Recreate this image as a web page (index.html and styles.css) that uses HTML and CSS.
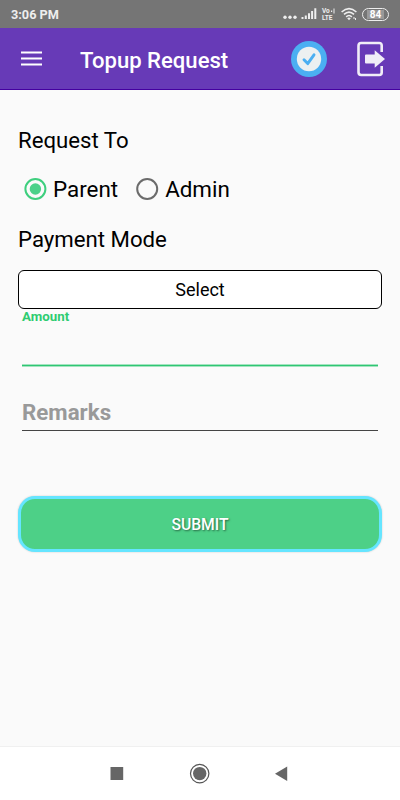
FILE: index.html
```
<!DOCTYPE html>
<html lang="en">
<head>
    <meta charset="UTF-8">
    <meta name="viewport" content="width=device-width, initial-scale=1.0">
    <title>Topup Request</title>
    <link rel="stylesheet" href="styles.css">
</head>
<body>
    <div class="status-bar">
        <span class="time">3:06 PM</span>
        <div class="status-icons">
            <svg class="dots" width="14" height="14" viewBox="0 0 14 14">
                <circle cx="2" cy="10.2" r="1.7"/><circle cx="7" cy="10.2" r="1.7"/><circle cx="12" cy="10.2" r="1.7"/>
            </svg>
            <svg class="signal" width="16" height="14" viewBox="0 0 16 14">
                <path d="M.5 10h2v2h-2zM3.8 8.5h2V12h-2zM7 6.3h2V12H7zM10.1 4h2v8h-2zM13.3 1.3h2V12h-2z"/>
            </svg>
            <div class="volte">
                <div class="volte-top">
                    <span>Vo</span>
                    <svg width="4" height="6" viewBox="0 0 4 6"><path d="M0 2.5h1.2V4H0zM2.5 .5h1v5h-1z"/></svg>
                </div>
                <span>LTE</span>
            </div>
            <svg class="wifi" width="17" height="14" viewBox="0 0 17 14">
                <path d="M.6 5Q8 -1.8 15.4 5M3 7.4Q8 2.8 13 7.4M5.2 9.8Q8 7.2 10.8 9.8" fill="none" stroke="#eee" stroke-width="1.6"/>
                <path d="M6.2 11.2Q8 9.8 9.8 11.2L8 13.2zM12.5 10h1v2h-1zM14 11h1v2h-1z"/>
            </svg>
            <span class="battery"><span>84</span></span>
        </div>
    </div>

    <header class="app-bar">
        <svg class="menu" width="22" height="16" viewBox="0 0 22 16">
            <path d="M0 1.5h21M0 7.5h21M0 13.5h21" stroke="#fff" stroke-width="2"/>
        </svg>
        <h1>Topup Request</h1>
        <svg class="check" width="36" height="36" viewBox="0 0 36 36">
            <circle cx="18" cy="18" r="18" fill="#4baff2"/>
            <circle cx="18" cy="18" r="12.2" fill="#ecf0f1"/>
            <path d="M13 18.8l3.7 3.8 6.3-8.8" fill="none" stroke="#4baff2" stroke-width="2.9" stroke-linecap="round" stroke-linejoin="round"/>
        </svg>
        <svg class="logout" width="28" height="36" viewBox="0 0 28 36">
            <path d="M24.7 11V4.5Q24.7 2 22.2 2H4.2Q1.5 2 1.5 4.7V31.3Q1.5 34 4.2 34H22.2Q24.7 34 24.7 31.5V25" fill="none" stroke="#f0edf7" stroke-width="2.6"/>
            <path d="M9 13.6h8.7V9.2L28 18l-10.3 8.8v-4.4H9q-1 0-1-1v-6.8q0-1 1-1z" fill="#f0edf7"/>
        </svg>
    </header>

    <main class="content">
        <h2>Request To</h2>
        <div class="radio-group">
            <label class="radio">
                <svg width="24" height="24" viewBox="0 0 24 24">
                    <circle cx="12.4" cy="12" r="10" fill="none" stroke="#3ecf7e" stroke-width="2"/>
                    <circle cx="12.4" cy="12" r="5.7" fill="#4bd189"/>
                </svg>
                <span>Parent</span>
            </label>
            <label class="radio">
                <svg width="24" height="24" viewBox="0 0 24 24">
                    <circle cx="12.2" cy="12" r="10" fill="none" stroke="#6b6b6b" stroke-width="2"/>
                </svg>
                <span>Admin</span>
            </label>
        </div>
        <h2>Payment Mode</h2>
        <button class="select" type="button">Select</button>
        <div class="field amount"><span>Amount</span></div>
        <div class="field remarks"><span>Remarks</span></div>
        <button class="submit" type="button">SUBMIT</button>
    </main>

    <nav class="nav-bar">
        <svg width="200" height="24" viewBox="0 0 200 24">
            <path d="M10.5 5h12.7v13H10.5zM187.2 4.500v14.5L175 11.700z" fill="#666"/>
            <circle cx="99.7" cy="11.6" r="9.2" fill="none" stroke="#555" stroke-width="1.2"/>
            <circle cx="99.7" cy="11.6" r="6.7" fill="#666"/>
        </svg>
    </nav>
</body>
</html>
```
FILE: styles.css
```
* {
    box-sizing: border-box;
}
body {
    margin: 0;
    height: 800px;
    display: flex;
    flex-direction: column;
    background-color: #fafafa;
    font-family: Roboto, sans-serif;
    color: #000;
    overflow: hidden;
}
.status-bar {
    height: 28px;
    flex: none;
    display: flex;
    align-items: center;
    justify-content: space-between;
    padding: 0 11px;
    background-color: #757575;
    color: #eee;
}
.time {
    padding-top: 1px;
    font-size: 12.7px;
    font-weight: 700;
    line-height: 27px;
}
.status-icons {
    display: flex;
    align-items: center;
    fill: #eee;
}
.signal {
    margin: 0 5px 0 4px;
}
.volte {
    width: 14px;
    display: flex;
    flex-direction: column;
    gap: 1px;
    font-size: 6.5px;
    font-weight: 700;
    line-height: 6px;
}
.volte-top {
    display: flex;
    gap: 1px;
    height: 6px;
}
.wifi {
    margin: 0 4px 0 5px;
}
.battery {
    width: 27px;
    height: 13px;
    padding: 1px 4px;
    border: 1px solid #eee;
    border-radius: 7px;
}
.battery span {
    display: block;
    height: 9px;
    background-color: #999;
    color: #fff;
    font-size: 10px;
    font-weight: 700;
    line-height: 9px;
    text-align: center;
}
/* purple header */
.app-bar {
    height: 62px;
    flex: none;
    display: flex;
    align-items: center;
    padding: 0 15px 0 21px;
    background-color: #673ab7;
    border-bottom: 1px solid #4500a0;
}
.app-bar h1 {
    flex: 1;
    margin: 3px 0 0 37px;
    color: #fff;
    font-size: 22.1px;
    font-weight: 500;
}
.logout {
    margin-left: 30px;
}
.content {
    flex: 1;
    display: flex;
    flex-direction: column;
    padding: 35px 18px 0;
}
.content h2 {
    margin: 0;
    font-size: 22.2px;
    font-weight: 400;
    line-height: 30px;
}
.radio-group {
    display: flex;
    gap: 17px;
    height: 69px;
    padding: 0 0 1px 5px;
    align-items: center;
}
.radio {
    display: flex;
    align-items: center;
    gap: 6px;
    font-size: 22.4px;
    line-height: 30px;
}
.select {
    height: 39px;
    margin-top: 16px;
    padding: 0 0 1px;
    border: 1px solid #000;
    border-radius: 6px;
    background-color: #fff;
    color: #000;
    font: 400 18px Roboto, sans-serif;
}
.field {
    margin: 0 4px;
    font-weight: 700;
}
.amount {
    height: 58px;
    background: linear-gradient(#a3e4c0 1px, #2fc673 1px, #2fc673 2px, #a3e4c0 2px) bottom / 100% 3px no-repeat;
    color: #2ecc71;
    font-size: 13.3px;
    line-height: 16px;
}
.remarks {
    height: 64px;
    padding-top: 30px;
    border-bottom: 1px solid #444;
    color: #999;
    font-size: 22.3px;
    line-height: 30px;
}
.submit {
    height: 56px;
    margin-top: 65px;
    padding: 0;
    border: 3px solid #65e5ff;
    border-radius: 17px;
    background-color: #4dd087;
    box-shadow: 0 0 2px rgba(0, 0, 0, 0.2);
    color: #fff;
    font: 500 15.7px Roboto, sans-serif;
    text-shadow: 1px 1px 2px rgba(0, 0, 0, 0.5);
}
/* system buttons */
.nav-bar {
    height: 54px;
    flex: none;
    display: flex;
    align-items: center;
    justify-content: center;
    background-color: #fff;
    border-top: 1px solid #f0f0f0;
}
```
